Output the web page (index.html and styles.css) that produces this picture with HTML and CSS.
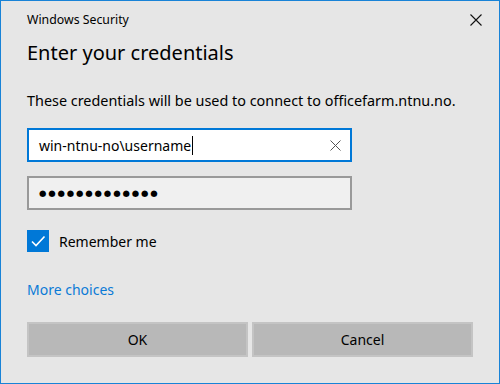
FILE: index.html
```html
<!DOCTYPE html>
<html lang="en">
<head>
  <meta charset="UTF-8">
  <title>Windows Security</title>
  <link rel="stylesheet" href="styles.css">
</head>
<body>
  <div class="dialog">
    <div class="titlebar">
      <span class="title">Windows Security</span>
      <svg class="close" width="12" height="12" viewBox="0 0 12 12"><path d="M0.5 0.5L11.5 11.5M11.5 0.5L0.5 11.5" stroke="#111" stroke-width="1.1"/></svg>
    </div>
    <h1 class="heading">Enter your credentials</h1>
    <p class="info">These credentials will be used to connect to officefarm.ntnu.no.</p>

    <div class="field field-active">
      <span class="value">win-ntnu-no\username</span><span class="caret"></span>
      <svg class="clear" width="11" height="11" viewBox="0 0 11 11"><path d="M0.5 0.5L10.5 10.5M10.5 0.5L0.5 10.5" stroke="#555" stroke-width="1"/></svg>
    </div>
    <div class="field field-pass">
      <span class="dots">●●●●●●●●●●●●●</span>
    </div>

    <label class="remember">
      <span class="check"><svg width="22" height="22" viewBox="0 0 22 22"><path d="M5 11.5L9 15.5L17.5 6.5" fill="none" stroke="#fff" stroke-width="1.6"/></svg></span>
      Remember me
    </label>

    <a class="more" href="#">More choices</a>

    <div class="buttons">
      <button class="btn">OK</button>
      <button class="btn">Cancel</button>
    </div>
  </div>
</body>
</html>
```

FILE: styles.css
```css
/* Base */
* { margin: 0; padding: 0; box-sizing: border-box; }
body { background: #e6e6e6; font-family: 'Noto Sans', 'Open Sans', sans-serif; color: #000; }

/* Dialog frame */
.dialog {
  width: 500px; height: 384px;
  border: 1px solid #1883d7;
  background: #e6e6e6;
  padding: 0 26px;
  display: flex; flex-direction: column;
}

/* Title bar */
.titlebar {
  display: flex; justify-content: space-between; align-items: center;
  height: 36px; padding-top: 1px;
}
.title { font-size: 12.3px; }
.close { margin-right: -9px; }

.heading { font-size: 20px; font-weight: 400; line-height: 26px; margin-top: 3px; }
.info { font-size: 14.4px; line-height: 20px; margin-top: 25px; }

/* Inputs */
.field {
  width: 325px; height: 34px;
  border: 2px solid #999;
  display: flex; align-items: center;
  padding: 0 10px; font-size: 14px;
}
.field-active { border-color: #0078d7; background: #fff; margin-top: 17px; }
.caret { width: 1px; height: 19px; background: #000; margin-left: 1px; }
.clear { margin-left: auto; margin-right: -1px; }
.field-pass { background: #f0f0f0; margin-top: 14px; }
.dots { font-family: 'DejaVu Sans', sans-serif; font-size: 8.5px; letter-spacing: 1.85px; }

/* Checkbox */
.remember { display: flex; align-items: center; gap: 10px; font-size: 14px; margin-top: 20px; }
.check { width: 22px; height: 22px; background: #0078d7; display: block; }
.check svg { display: block; }

.more { color: #0a7ad6; text-decoration: none; font-size: 14px; margin-top: 28px; align-self: flex-start; }

/* Buttons */
.buttons { display: flex; gap: 4px; margin-top: 23px; }
.btn {
  flex: 1; height: 35px;
  background: #b8b8b8; border: 2px solid #c4c4c4;
  font-family: inherit; font-size: 14px; color: #000;
}
```
